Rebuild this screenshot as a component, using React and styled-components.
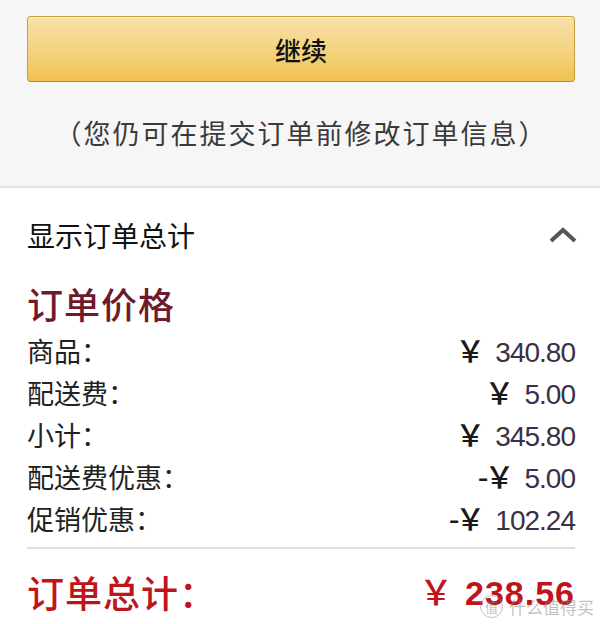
import React from "react";
import styled, { createGlobalStyle } from "styled-components";

const GlobalStyle = createGlobalStyle`
  html, body { margin: 0; padding: 0; background: #ffffff; }
  body { font-family: "Noto Sans CJK SC", "Noto Sans", sans-serif; }
  * { box-sizing: border-box; }
`;

const Page = styled.div`
  width: 600px;
  height: 624px;
  position: relative;
  overflow: hidden;
  background: #ffffff;
`;

const TopSection = styled.section`
  background: #f6f6f6;
  padding: 16px 25px 33px 27px;
  border-bottom: 2px solid #e2e2e2;
  display: flex;
  flex-direction: column;
`;

const ContinueButton = styled.button`
  height: 66px;
  width: 100%;
  border: 1px solid #c8a13e;
  border-bottom-color: #b58e2a;
  border-radius: 4px;
  background: linear-gradient(to bottom, #f8e2aa 0%, #f4d27e 55%, #efc14e 100%);
  box-shadow: inset 0 1px 0 rgba(255, 255, 255, 0.55);
  font-family: "Noto Sans CJK SC", sans-serif;
  font-size: 26px;
  font-weight: 500;
  color: #111;
  display: flex;
  align-items: center;
  justify-content: center;
  padding: 0;
`;

const Note = styled.p`
  margin: 31px 0 0;
  height: 40px;
  line-height: 40px;
  text-align: center;
  font-size: 27px;
  letter-spacing: 2px;
  color: #3a3a3a;
  white-space: nowrap;
`;

const Summary = styled.section`
  padding: 17px 25px 0 27px;
  display: flex;
  flex-direction: column;
`;

const ToggleRow = styled.div`
  height: 60px;
  display: flex;
  align-items: center;
  justify-content: space-between;
  font-size: 28px;
  color: #111;
`;

const Chevron = styled.svg`
  width: 30px;
  height: 18px;
  margin-right: -3px;
`;

const Heading = styled.h2`
  margin: 16px 0 0;
  height: 44px;
  line-height: 44px;
  font-size: 36px;
  font-weight: 500;
  letter-spacing: 1px;
  color: #6e1a2a;
`;

const Rows = styled.div`
  margin-top: 4px;
  display: flex;
  flex-direction: column;
`;

const Row = styled.div`
  height: 42px;
  display: flex;
  align-items: center;
  justify-content: space-between;
`;

const Label = styled.span`
  font-size: 27px;
  color: #222;
`;

const Amount = styled.span`
  display: flex;
  align-items: baseline;
  white-space: nowrap;
  line-height: 1;
`;

const Yen = styled.span`
  font-family: "Noto Sans CJK SC", sans-serif;
  font-size: ${(p) => (p.$total ? "34px" : "30px")};
  font-weight: 500;
  letter-spacing: ${(p) => (p.$total ? "0" : "-4px")};
  color: ${(p) => (p.$total ? "#c0141b" : "#1a1a1a")};
  margin-right: ${(p) => (p.$total ? "12px" : "14px")};
`;

const Num = styled.span`
  font-family: "Liberation Sans", Arial, sans-serif;
  font-size: ${(p) => (p.$total ? "34px" : "28px")};
  font-weight: ${(p) => (p.$total ? 700 : 400)};
  letter-spacing: ${(p) => (p.$total ? "1px" : "-1px")};
  color: ${(p) => (p.$total ? "#c0141b" : "#3a3047")};
`;

const Divider = styled.hr`
  margin: 8px 0 0;
  border: 0;
  height: 2px;
  background: #dedede;
`;

const TotalRow = styled.div`
  margin-top: 18px;
  height: 50px;
  display: flex;
  align-items: center;
  justify-content: space-between;
`;

const TotalLabel = styled.span`
  font-size: 37px;
  font-weight: 500;
  letter-spacing: 1px;
  color: #c0141b;
`;

const Watermark = styled.div`
  position: absolute;
  right: 6px;
  bottom: 5px;
  display: flex;
  align-items: center;
  gap: 6px;
  color: rgba(140, 140, 140, 0.55);
  font-size: 17px;
  pointer-events: none;
`;

const WatermarkBadge = styled.span`
  width: 23px;
  height: 23px;
  border: 1.5px solid rgba(140, 140, 140, 0.55);
  border-radius: 50%;
  display: flex;
  align-items: center;
  justify-content: center;
  font-size: 13px;
`;

const items = [
  { label: "商品：", value: "340.80" },
  { label: "配送费：", value: "5.00" },
  { label: "小计：", value: "345.80" },
  { label: "配送费优惠：", value: "5.00", negative: true },
  { label: "促销优惠：", value: "102.24", negative: true },
];

export default function App() {
  return (
    <Page>
      <GlobalStyle />
      <TopSection>
        <ContinueButton>继续</ContinueButton>
        <Note>（您仍可在提交订单前修改订单信息）</Note>
      </TopSection>
      <Summary>
        <ToggleRow>
          <span>显示订单总计</span>
          <Chevron viewBox="0 0 30 18">
            <polyline
              points="3,15 15,4 27,15"
              fill="none"
              stroke="#555"
              strokeWidth="4"
              strokeLinejoin="miter"
            />
          </Chevron>
        </ToggleRow>
        <Heading>订单价格</Heading>
        <Rows>
          {items.map((it) => (
            <Row key={it.label}>
              <Label>{it.label}</Label>
              <Amount>
                <Yen>{it.negative ? "-￥" : "￥"}</Yen>
                <Num>{it.value}</Num>
              </Amount>
            </Row>
          ))}
        </Rows>
        <Divider />
        <TotalRow>
          <TotalLabel>订单总计：</TotalLabel>
          <Amount>
            <Yen $total>￥</Yen>
            <Num $total>238.56</Num>
          </Amount>
        </TotalRow>
      </Summary>
      <Watermark>
        <WatermarkBadge>值</WatermarkBadge>
        <span>什么值得买</span>
      </Watermark>
    </Page>
  );
}
